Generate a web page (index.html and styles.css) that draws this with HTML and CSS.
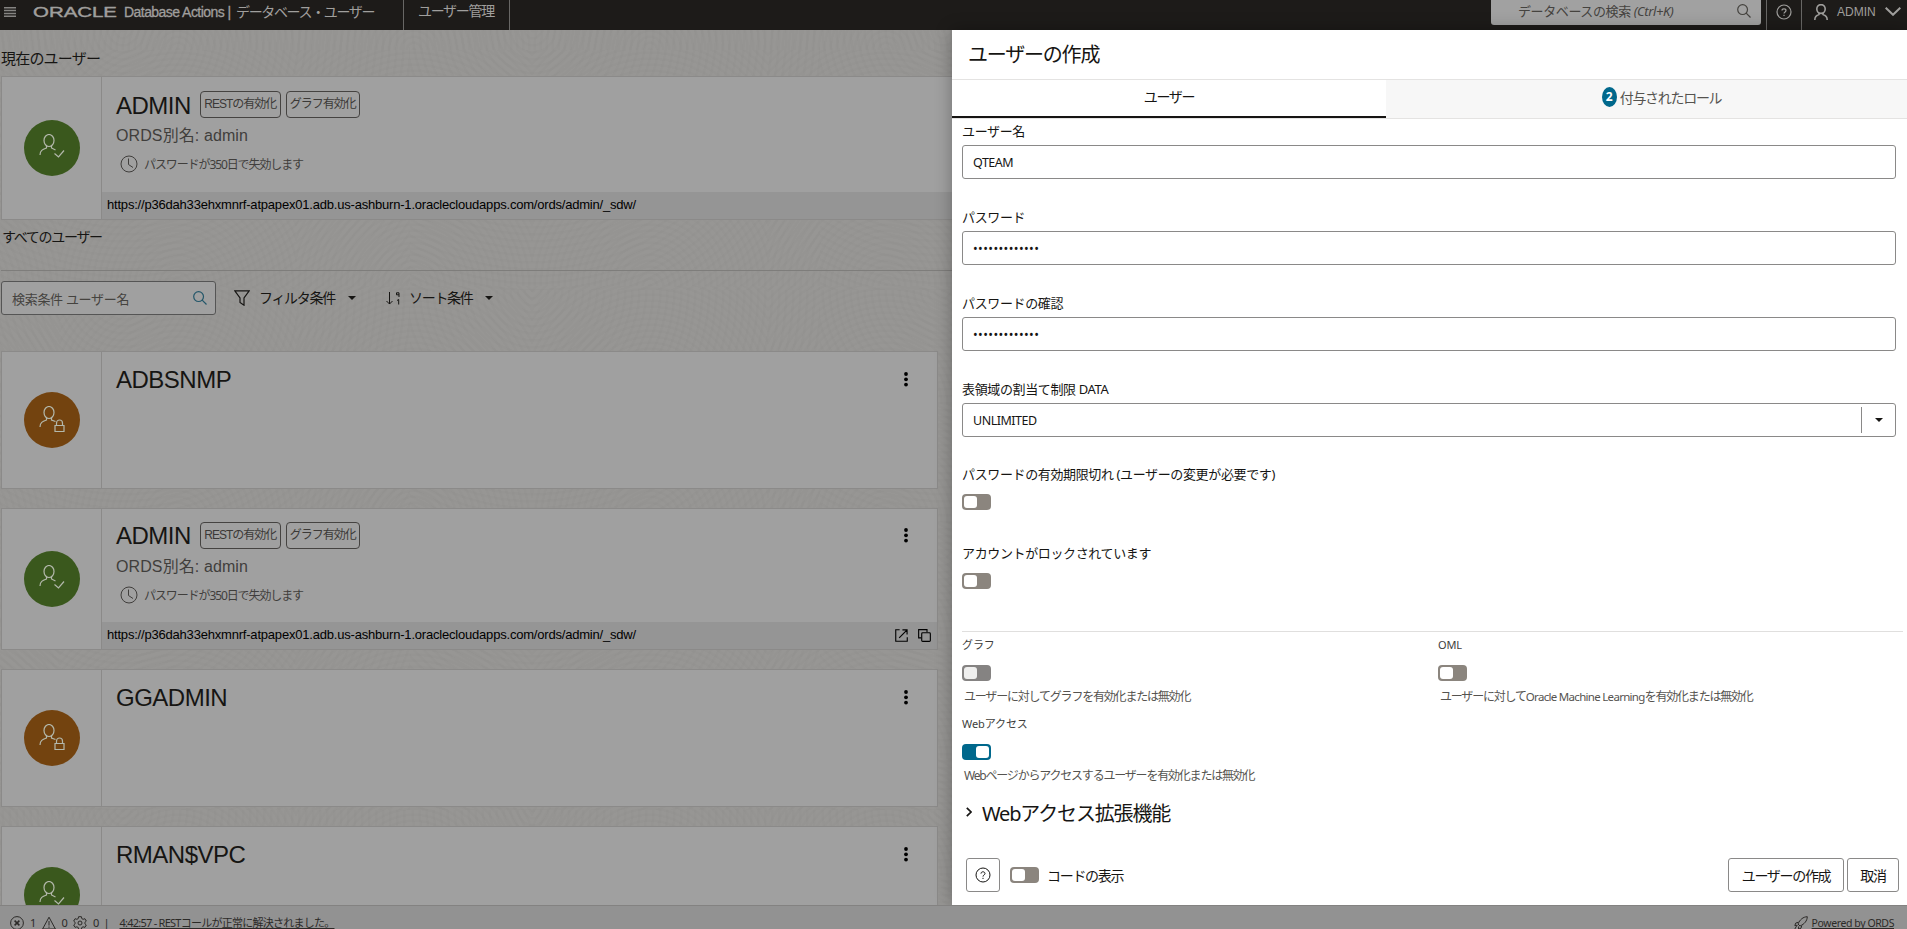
FILE: index.html
```html
<!DOCTYPE html>
<html lang="ja">
<head>
  <meta charset="UTF-8">
  <title>Database Actions | データベース・ユーザー</title>
  <meta name="viewport" content="width=device-width, initial-scale=1.0">
  <link rel="stylesheet" href="styles.css">
</head>
<body>

  <!-- Iconos compartidos -->
  <svg class="sprite">
    <symbol id="i-search" viewBox="0 0 14 14"><circle cx="5.6" cy="5.6" r="4.9"/><path d="M9.2 9.2L13.5 13.5"/></symbol>
    <symbol id="i-help" viewBox="0 0 16 16"><circle cx="8" cy="8" r="7"/><path d="M6 6.6C6 5.4 6.9 4.8 8 4.8s2 .7 2 1.8c0 1.3-2 1.4-2 3"/><path d="M8 10.8v1.2"/></symbol>
    <symbol id="i-clock" viewBox="0 0 18 18"><circle cx="9" cy="9" r="8"/><path d="M8.5 3.5V9.5L13 12.5"/></symbol>
    <symbol id="i-user-check" viewBox="0 0 26 24"><ellipse cx="10" cy="6.5" rx="5" ry="6"/><path d="M7.5 12v2C3.5 15.5 1 16.5 1 21M12.5 12v2l4 2M15.5 19.5l4 3.500 5.500-6.500"/></symbol>
    <symbol id="i-user-lock" viewBox="0 0 26 26"><ellipse cx="10" cy="6.5" rx="5" ry="6"/><path d="M7.5 12v2C3.5 15.5 1 16.5 1 21M12.5 12v2l4 1.500M16 19.500h9v6h-9zM17.500 19.500v-2.500a3 3 0 0 1 6 0v2.500"/></symbol>
    <symbol id="i-kebab" viewBox="0 0 4 15"><circle cx="2" cy="2" r="1.9"/><circle cx="2" cy="7.3" r="1.9"/><circle cx="2" cy="12.6" r="1.9"/></symbol>
  </svg>

  <header class="topbar">
    <svg class="menu-icon" viewBox="0 0 12 10"><path d="M0 .75h12M0 3.6h12M0 6.4h12M0 9.250h12"/></svg>
    <svg class="logo" viewBox="0 0 88 18"><text x="0" y="14" textLength="84" lengthAdjust="spacingAndGlyphs">ORACLE</text></svg>
    <span class="product">Database Actions |</span>
    <span class="app">データベース・ユーザー</span>
    <span class="section">ユーザー管理</span>
    <div class="global-search">
      <span class="hint">データベースの検索 <i>(Ctrl+K)</i></span>
      <svg class="line s14"><use href="#i-search"/></svg>
    </div>
    <div class="top-help"><svg class="line s16"><use href="#i-help"/></svg></div>
    <div class="account">
      <svg class="line who" viewBox="0 0 14 16"><ellipse cx="7" cy="5" rx="4.2" ry="4.4"/><path d="M5 9v1.5C2 11.5.8 12.5.8 16M9 9v1.5c3 1 4.2 2 4.2 5.5"/></svg>
      <span>ADMIN</span>
      <svg class="line chev" viewBox="0 0 16 9"><path d="M.7.7L8 7.800 15.300.7"/></svg>
    </div>
  </header>

  <div class="page">
    <main class="users">
      <h2 class="current">現在のユーザー</h2>

      <div class="card wide">
        <div class="avatar"><span class="circle ok"><svg class="line"><use href="#i-user-check"/></svg></span></div>
        <div class="info">
          <div class="name-row"><span class="name">ADMIN</span><span class="tag">RESTの有効化</span><span class="tag graph">グラフ有効化</span></div>
          <div class="alias">ORDS別名: admin</div>
          <div class="expires"><svg class="line"><use href="#i-clock"/></svg><span>パスワードが350日で失効します</span></div>
          <div class="url"><span>https://p36dah33ehxmnrf-atpapex01.adb.us-ashburn-1.oraclecloudapps.com/ords/admin/_sdw/</span></div>
        </div>
      </div>

      <h2 class="all">すべてのユーザー</h2>

      <div class="filters">
        <div class="user-search">
          <span>検索条件 ユーザー名</span>
          <svg class="line s14"><use href="#i-search"/></svg>
        </div>
        <svg class="line funnel" viewBox="0 0 16 16"><path d="M.8.8h14.4L10 8v7.2L6 12.500V8z"/></svg>
        <span class="filter-label">フィルタ条件</span>
        <span class="caret"></span>
        <svg class="line sort" viewBox="0 0 15 13"><path d="M3.5 0v12M.5 9l3 3 3-3M13 5V.8h-2.5v2h2.5M11 8.5l1.700-1V12.500"/></svg>
        <span class="sort-label">ソート条件</span>
        <span class="caret"></span>
      </div>

      <div class="card">
        <div class="avatar"><span class="circle locked"><svg class="line"><use href="#i-user-lock"/></svg></span></div>
        <div class="info"><div class="name-row"><span class="name">ADBSNMP</span><svg class="kebab"><use href="#i-kebab"/></svg></div></div>
      </div>

      <div class="card full">
        <div class="avatar"><span class="circle ok"><svg class="line"><use href="#i-user-check"/></svg></span></div>
        <div class="info">
          <div class="name-row"><span class="name">ADMIN</span><span class="tag">RESTの有効化</span><span class="tag graph">グラフ有効化</span><svg class="kebab"><use href="#i-kebab"/></svg></div>
          <div class="alias">ORDS別名: admin</div>
          <div class="expires"><svg class="line"><use href="#i-clock"/></svg><span>パスワードが350日で失効します</span></div>
          <div class="url">
            <span>https://p36dah33ehxmnrf-atpapex01.adb.us-ashburn-1.oraclecloudapps.com/ords/admin/_sdw/</span>
            <svg class="line open" viewBox="0 0 14 14"><path d="M5 .8H.8v12.400h12.400V9M4.500 9.500L12.500 1.500M8 1h5v5"/></svg>
            <svg class="line copy" viewBox="0 0 14 14"><path d="M3.500 9.500H.7V.7h9v2.800"/><rect x="4" y="4" width="9.3" height="9.3" rx="1"/></svg>
          </div>
        </div>
      </div>

      <div class="card">
        <div class="avatar"><span class="circle locked"><svg class="line"><use href="#i-user-lock"/></svg></span></div>
        <div class="info"><div class="name-row"><span class="name">GGADMIN</span><svg class="kebab"><use href="#i-kebab"/></svg></div></div>
      </div>

      <div class="card">
        <div class="avatar"><span class="circle ok"><svg class="line"><use href="#i-user-check"/></svg></span></div>
        <div class="info"><div class="name-row"><span class="name">RMAN$VPC</span><svg class="kebab"><use href="#i-kebab"/></svg></div></div>
      </div>
    </main>

    <!-- Panel de creación de usuario -->
    <aside class="drawer">
      <h1>ユーザーの作成</h1>
      <div class="tabs">
        <div class="tab active">ユーザー</div>
        <div class="tab roles"><span class="count">2</span><span>付与されたロール</span></div>
      </div>

      <form class="form">
        <div class="field">
          <label>ユーザー名</label>
          <div class="input">QTEAM</div>
        </div>
        <div class="field">
          <label>パスワード</label>
          <div class="input dots">•••••••••••••</div>
        </div>
        <div class="field">
          <label>パスワードの確認</label>
          <div class="input dots">•••••••••••••</div>
        </div>
        <div class="field">
          <label>表領域の割当て制限 DATA</label>
          <div class="input select"><span>UNLIMITED</span><span class="drop"><span class="caret"></span></span></div>
        </div>
        <div class="switch-field">
          <label>パスワードの有効期限切れ (ユーザーの変更が必要です)</label>
          <span class="toggle"></span>
        </div>
        <div class="switch-field last">
          <label>アカウントがロックされています</label>
          <span class="toggle"></span>
        </div>

        <div class="features">
          <div class="feature">
            <label>グラフ</label>
            <span class="toggle disabled"></span>
            <p>ユーザーに対してグラフを有効化または無効化</p>
          </div>
          <div class="feature">
            <label>OML</label>
            <span class="toggle"></span>
            <p>ユーザーに対して<span class="latin">Oracle Machine Learning</span>を有効化または無効化</p>
          </div>
          <div class="feature">
            <label>Webアクセス</label>
            <span class="toggle on"></span>
            <p>Webページからアクセスするユーザーを有効化または無効化</p>
          </div>
        </div>

        <div class="advanced">
          <svg class="line" viewBox="0 0 6 10"><path d="M.8.8L5 5 .8 9.200"/></svg>
          <span>Webアクセス拡張機能</span>
        </div>
      </form>

      <footer class="drawer-footer">
        <span class="btn help"><svg class="line"><use href="#i-help"/></svg></span>
        <span class="toggle"></span>
        <span class="code-label">コードの表示</span>
        <span class="btn create">ユーザーの作成</span>
        <span class="btn cancel">取消</span>
      </footer>
    </aside>
  </div>

  <div class="statusbar">
    <svg class="line" viewBox="0 0 14 14"><circle cx="7" cy="7" r="6.4"/><path d="M4.6 4.6l4.8 4.8M9.4 4.6l-4.8 4.8" stroke-width="1.5"/></svg>
    <span class="num">1</span>
    <svg class="line" viewBox="0 0 14 14"><path d="M7 1.2L13.4 13H.6zM7 5v4.5M7 10.5v1.3"/></svg>
    <span class="num">0</span>
    <svg class="line" viewBox="0 0 14 14"><circle cx="7" cy="7" r="2"/><path d="M5.6.7h2.8l.4 1.9 1.3.7 1.8-.6 1.4 2.4-1.4 1.3v1.3l1.4 1.3-1.4 2.4-1.8-.6-1.3.7-.4 1.900H5.600l-.4-1.900-1.300-.7-1.800.6L.7 9l1.400-1.300V6.400L.7 5.100l1.400-2.400 1.800.6 1.300-.7z"/></svg>
    <span class="num">0</span>
    <span class="bar">|</span>
    <span class="message">4:42:57 - RESTコールが正常に解決されました。</span>
    <svg class="line rocket" viewBox="0 0 14 14"><path d="M4 8C6 3.500 9 .9 13.300.7 13.100 5 10.500 8 6 10zM4.500 6.200L1.800 7 .8 9.500l2.800-.2M7.800 9.500L7 12.200l-2.500 1 .2-2.800M2.500 10L.7 13.300"/></svg>
    <span class="powered">Powered by ORDS</span>
  </div>

</body>
</html>
```

FILE: styles.css
```css
* {
  box-sizing: border-box;
}

body {
  margin: 0;
  height: 929px;
  overflow: hidden;
  display: flex;
  flex-direction: column;
  font-family: "Noto Sans", "Noto Sans CJK JP", sans-serif;
  font-size: 13px;
  color: #161513;
  background: #979694;
  white-space: nowrap;
}

h1, h2, p {
  margin: 0;
  font-weight: normal;
}

.sprite {
  display: none;
}

.line {
  fill: none;
  stroke: currentColor;
  stroke-width: 1.2;
  flex: none;
}

.s14 { width: 14px; height: 14px; }
.s16 { width: 16px; height: 16px; }

.caret {
  border: 4.5px solid transparent;
  border-top-color: currentColor;
  border-bottom: 0;
  flex: none;
}

/* Barra superior */
.topbar {
  height: 30px;
  flex: none;
  display: flex;
  align-items: center;
  padding-bottom: 7px;
  background: #1d1b19;
  color: #a09f9d;
}

.menu-icon {
  width: 12px;
  height: 10px;
  margin-left: 4px;
  stroke: #858482;
  stroke-width: 1.5;
}

.logo {
  width: 88px;
  height: 18px;
  margin-left: 17px;
  fill: #a09f9d;
  stroke: #a09f9d;
  stroke-width: 0.4;
  font-family: "Liberation Sans", sans-serif;
  font-size: 14px;
}

.product {
  width: 112px;
  margin-left: 3px;
  font-family: "Liberation Sans", sans-serif;
  font-size: 14px;
  letter-spacing: -0.55px;
  -webkit-text-stroke: 0.3px;
}

.app {
  width: 167px;
  margin-top: -2px;
  font-size: 14px;
  letter-spacing: -1.35px;
}

.section {
  height: 30px;
  width: 107px;
  margin-bottom: -7px;
  padding-left: 14px;
  line-height: 22px;
  font-size: 14px;
  letter-spacing: -1.3px;
  border-left: 1px solid #686765;
  border-right: 1px solid #686765;
}

.global-search {
  height: 28px;
  width: 270px;
  margin-left: auto;
  margin-top: -1px;
  display: flex;
  align-items: center;
  padding: 0 10px 1px 27px;
  border-radius: 3px;
  background: #a1a1a1;
  color: #45433f;
}

.global-search .hint {
  margin-right: auto;
  letter-spacing: -0.4px;
}

.top-help {
  height: 30px;
  width: 36px;
  margin: 0 0 -7px 5px;
  padding: 4px 0 0 9px;
  border-left: 1px solid #686765;
  border-right: 1px solid #686765;
}

.account {
  width: 105px;
  display: flex;
  align-items: center;
  font-family: "Liberation Sans", sans-serif;
  font-size: 12px;
  padding-left: 12px;
}

.account .who { width: 14px; height: 16px; margin-right: 9px; stroke-width: 1.6; }
.account .chev { width: 16px; height: 9px; margin-left: 9px; stroke-width: 2; }

/* Lista de usuarios */
.page {
  height: 875px;
  flex: none;
  display: flex;
}

.users {
  width: 952px;
  flex: none;
  overflow: hidden;
  padding-left: 1px;
  background:
    repeating-radial-gradient(circle at 50% 100%, rgba(0,0,0,0.013) 0 2px, transparent 3px 6px) 60px 20px / 236px 118px,
    repeating-radial-gradient(circle at 30% 0, rgba(0,0,0,0.01) 0 2px, transparent 3px 7px) 0 0 / 410px 260px,
    #979694;
}

.users h2 {
  font-size: 15px;
  letter-spacing: -0.8px;
  line-height: 22px;
}

.current {
  margin-top: 17px;
  height: 29px;
}

.users .all {
  height: 51px;
  padding: 6px 0 0 1px;
  letter-spacing: -1.3px;
  font-size: 14px;
  border-bottom: 1px solid #7e7d7b;
}

.card {
  width: 937px;
  height: 138px;
  display: flex;
  margin-bottom: 19px;
  border: 1px solid #8b8a89;
  background: #a0a0a0;
}

.card.full { height: 142px; }
.card.wide { width: 960px; height: 144px; margin-bottom: 0; }

.avatar {
  width: 100px;
  flex: none;
  display: flex;
  align-items: center;
  justify-content: center;
  border-right: 1px solid #8b8a89;
}

.circle {
  width: 56px;
  height: 56px;
  padding: 14px 0 0 15px;
  border-radius: 50%;
  color: #b3b8ab;
}

.circle svg { width: 26px; height: 26px; display: block; }
.circle.ok { background: #3a581d; }
.circle.ok svg { height: 24px; }
.circle.locked { background: #73430f; }

.info {
  flex: 1;
  display: flex;
  flex-direction: column;
}

.name-row {
  display: flex;
  align-items: center;
  height: 27px;
  margin: 14px 0 0 14px;
}

.full .name-row { margin-top: 13px; }

.name {
  font-family: "Liberation Sans", sans-serif;
  font-size: 24px;
  line-height: 27px;
  letter-spacing: -0.5px;
}

.tag {
  width: 81px;
  height: 27px;
  margin-left: 9px;
  border: 1px solid #454341;
  border-radius: 4px;
  color: #3b3937;
  font-family: "Liberation Sans", "Noto Sans CJK JP", sans-serif;
  font-size: 12px;
  letter-spacing: -1px;
  line-height: 25px;
  text-align: center;
}

.wide .name { padding-top: 1px; }

.tag.graph {
  width: 74px;
  margin-left: 5px;
}

.kebab {
  width: 4px;
  height: 15px;
  margin-left: auto;
  margin-right: 29px;
}

.alias {
  margin: 7px 0 0 14px;
  color: #403e3c;
  font-family: "Liberation Sans", "Noto Sans CJK JP", sans-serif;
  font-size: 16px;
  line-height: 22px;
  letter-spacing: 0.1px;
}

.expires {
  display: flex;
  align-items: center;
  height: 20px;
  margin: 7px 0 0 18px;
  color: #403e3c;
  font-size: 12px;
  letter-spacing: -1.1px;
}

.expires svg { width: 18px; height: 18px; margin-right: 6px; stroke-width: 1; }

.url {
  height: 27px;
  margin-top: auto;
  display: flex;
  align-items: center;
  padding: 0 6px 2px 5px;
  background: #959595;
  color: #000;
  font-family: "Liberation Sans", sans-serif;
  letter-spacing: -0.2px;
}

.url .open { width: 13px; height: 13px; margin: 2px 10px 0 auto; }
.url .copy { width: 13px; height: 13px; margin-top: 2px; }

.filters {
  display: flex;
  align-items: center;
  height: 34px;
  margin: 10px 0 36px;
  font-size: 14px;
  letter-spacing: -1.3px;
}

.user-search {
  width: 215px;
  height: 34px;
  display: flex;
  align-items: center;
  justify-content: space-between;
  padding: 0 8px 0 10px;
  border: 1px solid #555;
  border-radius: 3px;
  background: #a0a0a0;
  color: #45433f;
  font-size: 13px;
  letter-spacing: -0.3px;
}

.user-search svg { color: #24576a; }
.funnel { width: 16px; height: 16px; margin: 0 9px 0 18px; }
.filter-label { width: 89px; padding-bottom: 2px; }
.sort { width: 15px; height: 13px; margin: 0 8px 0 30px; stroke-width: 1; }
.sort-label { width: 76px; padding-bottom: 2px; }

/* Panel lateral */
.drawer {
  flex: 1;
  display: flex;
  flex-direction: column;
  background: #fff;
  box-shadow: 0 0 16px rgba(0, 0, 0, 0.3);
}

.drawer h1 {
  height: 49px;
  padding-left: 16px;
  font-size: 20px;
  line-height: 49px;
  letter-spacing: -1.2px;
}

.tabs {
  height: 40px;
  display: flex;
  border-top: 1px solid #e4e3e2;
  border-bottom: 1px solid #e4e3e2;
  font-size: 14px;
  letter-spacing: -1.3px;
}

.tab {
  flex: 1;
  display: flex;
  align-items: center;
  justify-content: center;
  padding-bottom: 5px;
  background: #f7f7f7;
  color: #55534f;
}

.tab.roles {
  padding-left: 30px;
}

.tab.active {
  flex: 0 0 434px;
  padding-bottom: 4px;
  background: #fff;
  color: #161513;
  border-bottom: 2px solid #161513;
}

.count {
  width: 15px;
  height: 20px;
  margin-right: 3px;
  border-radius: 50%;
  background: #00688c;
  color: #fff;
  font-size: 12px;
  font-weight: bold;
  line-height: 20px;
  text-align: center;
  letter-spacing: 0;
}

.form {
  flex: 1;
  padding: 2px 4px 0 10px;
}

.form label {
  display: block;
  letter-spacing: -0.37px;
}

.field {
  height: 86px;
  padding-right: 7px;
}

.field label {
  height: 24px;
  line-height: 20px;
}

.input {
  height: 34px;
  padding: 0 0 0 10px;
  border: 1px solid #8a8988;
  border-radius: 3px;
  font-size: 12.5px;
  line-height: 33px;
  letter-spacing: -0.5px;
}

.dots {
  letter-spacing: 0.4px;
}

.select {
  display: flex;
  justify-content: space-between;
  align-items: center;
}

.drop {
  width: 34px;
  height: 26px;
  display: flex;
  align-items: center;
  justify-content: center;
  border-left: 1px solid #8a8988;
}

.switch-field {
  height: 79px;
}

.switch-field.last {
  height: 87px;
}

.switch-field label {
  height: 29px;
  line-height: 19px;
}

.toggle {
  display: block;
  flex: none;
  width: 29px;
  height: 16px;
  padding: 2px;
  border-radius: 4px;
  background: #8b857e;
}

.toggle::before {
  content: "";
  display: block;
  width: 13px;
  height: 12px;
  border-radius: 3px;
  background: #fff;
}

.toggle.disabled { background: #858382; }
.toggle.disabled::before { background: #efefee; }
.toggle.on { background: #00688c; }
.toggle.on::before { margin-left: 12px; }

.features {
  display: grid;
  grid-template-columns: 476px 1fr;
  border-top: 1px solid #e0dfde;
  padding-top: 3px;
}

.feature {
  height: 79px;
}

.form .feature label {
  height: 30px;
  font-size: 11px;
  line-height: 20px;
  letter-spacing: -0.1px;
  color: #403e3c;
}

.feature p {
  padding: 6px 0 0 2px;
  color: #55534f;
  font-size: 12px;
  line-height: 20px;
  letter-spacing: -1.2px;
}

.feature .latin {
  font-size: 11.5px;
  letter-spacing: -0.7px;
}

.advanced {
  display: flex;
  align-items: center;
  height: 40px;
  margin-top: -1px;
  padding-left: 4px;
  font-size: 20px;
  letter-spacing: -1.15px;
}

.advanced svg { width: 6px; height: 10px; margin-right: 10px; stroke-width: 1.7; }

.drawer-footer {
  display: flex;
  align-items: center;
  height: 60px;
  padding: 0 8px 0 14px;
  font-size: 14px;
  letter-spacing: -1.3px;
}

.btn {
  height: 34px;
  display: flex;
  align-items: center;
  justify-content: center;
  border: 1px solid #8a8988;
  border-radius: 3px;
}

.btn.help { width: 34px; margin-right: 10px; }
.btn.help svg { width: 16px; height: 16px; stroke-width: 1; }
.code-label { margin-left: 8px; margin-right: auto; }
.btn.create { width: 116px; }
.btn.cancel { width: 52px; margin-left: 3px; }

/* Barra de estado */
.statusbar {
  height: 24px;
  flex: none;
  display: flex;
  align-items: center;
  padding: 10px 13px 0 10px;
  border-top: 1px solid #838281;
  background: #929292;
  color: #2c2a28;
  font-size: 11px;
  line-height: 14px;
}

.statusbar svg { width: 14px; height: 14px; stroke-width: 1; }
.num { width: 17.5px; padding-left: 6px; }
.bar { width: 19px; margin-left: -4px; padding-left: 3px; }
.message,
.powered {
  text-decoration: underline;
  text-decoration-skip-ink: none;
  text-underline-offset: 1px;
}
.message { margin-right: auto; letter-spacing: -0.75px; }
.rocket { margin-right: 4px; }
.powered { font-size: 10.5px; letter-spacing: -0.4px; }
```
